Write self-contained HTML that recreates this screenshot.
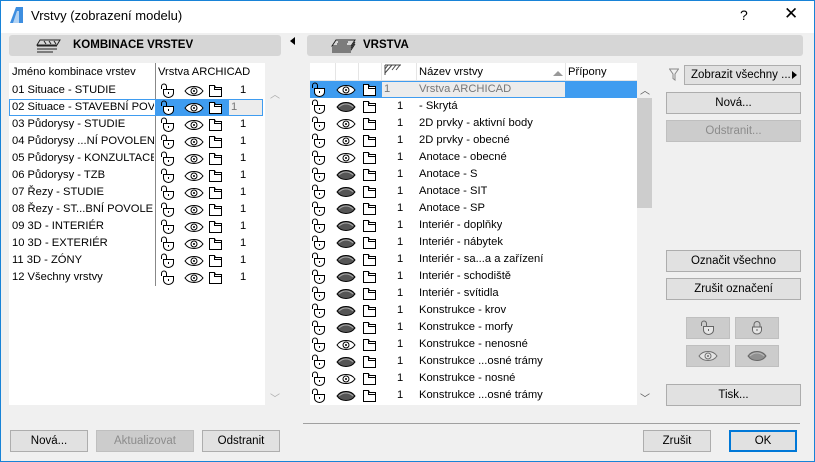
<!DOCTYPE html>
<html><head><meta charset="utf-8"><style>
*{box-sizing:border-box;margin:0;padding:0}
body{width:815px;height:462px;overflow:hidden;background:#f0f0f0;font-family:"Liberation Sans",sans-serif;font-size:11.2px;color:#000;position:relative}
.a{position:absolute}
.win{position:absolute;left:0;top:0;width:815px;height:462px;border:1px solid #1883d7}
.title{left:1px;top:1px;width:813px;height:32px;background:#fff}
.hb{background:#d6d6d6;border-radius:3px;height:21px;font-weight:bold;font-size:11.5px;line-height:21px}
.btn{position:absolute;background:#e1e1e1;border:1px solid #adadad;text-align:center;line-height:20px;height:22px;font-size:11.5px}
.dis{color:#8c8c8c;background:#cccccc;border-color:#bfbfbf}
.row{position:absolute;height:17px;line-height:17px;white-space:nowrap;overflow:hidden}
svg.i{position:absolute}
</style></head><body>
<svg width="0" height="0" style="position:absolute">
<defs>
<symbol id="lk" viewBox="0 0 16 16"><path d="M1.5 6V3.5a2.5 2.5 0 0 1 5 0V6" fill="none" stroke="#000"/><path d="M3.5 6.5h10v3.5a5 4.5 0 0 1-10 0z" fill="#fff" stroke="#000"/><path d="M8.5 9v2" stroke="#000"/></symbol>
<symbol id="ey" viewBox="0 0 20 12"><path d="M1 6C5 0 15 0 19 6C15 12 5 12 1 6z" fill="#fff" stroke="#000"/><circle cx="10" cy="6" r="3" fill="none" stroke="#000"/><circle cx="10" cy="6" r="1" fill="#000"/></symbol>
<symbol id="ef" viewBox="0 0 20 12"><path d="M1 6C5 0 15 0 19 6C15 12 5 12 1 6z" fill="#555" stroke="#000"/><path d="M3 6C7 2 13 2 17 6" fill="none" stroke="#aaa"/></symbol>
<symbol id="dc" viewBox="0 0 16 16"><path d="M1.5 2.5h5l1 2h6v9h-12z" fill="#fff" stroke="#000"/><path d="M6.5 2.5v4h7" fill="none" stroke="#000"/></symbol>
</defs></svg>
<div class="win"></div>
<div class="a title"></div>
<svg class="a" style="left:9px;top:6px" width="16" height="18"><path d="M1 17L7 1h7v16z" fill="#3d8ee0"/><path d="M4 17L8 5h2v12z" fill="#fff" opacity=".6"/></svg>
<div class="a" style="left:31px;top:8px;font-size:13px">Vrstvy (zobrazení modelu)</div>
<div class="a" style="left:740px;top:7px;font-size:14px">?</div>
<div class="a" style="left:784px;top:4px;font-size:17px">✕</div>

<div class="a hb" style="left:9px;top:35px;width:272px"><span style="position:absolute;left:64px">KOMBINACE VRSTEV</span>
<svg class="i" style="left:25px;top:3px" width="30" height="16"><path d="M6 2h20l-3 5H3zM3 8h20M3 11h20M3 14h16" fill="none" stroke="#222"/><path d="M10 3l2 3M15 3l2 3M20 3l2 3" stroke="#222"/></svg></div>
<div class="a" style="left:290px;top:37px;width:0;height:0;border-top:4px solid transparent;border-bottom:4px solid transparent;border-right:5px solid #000"></div>
<div class="a" style="left:9px;top:63px;width:256px;height:342px;background:#fff"></div>
<div class="a" style="left:155px;top:63px;width:1px;height:223px;background:#888"></div>
<div class="row" style="left:12px;top:64px">Jméno kombinace vrstev</div>
<div class="row" style="left:158px;top:64px">Vrstva ARCHICAD</div>
<div class="a" style="left:155px;top:99px;width:73px;height:17px;background:#3f9cf0"></div>
<div class="a" style="left:228px;top:99px;width:35px;height:17px;background:#ececec;border:1px solid #3f9cf0"></div>
<div class="a" style="left:9px;top:99px;width:147px;height:17px;border:1px solid #3f9cf0"></div>
<div class="a" style="left:270px;top:86px;color:#aaa;font-size:10px">︿</div>
<div class="a" style="left:270px;top:390px;color:#aaa;font-size:10px">﹀</div>
<div id="L"></div>

<div class="a hb" style="left:307px;top:35px;width:496px"><span style="position:absolute;left:56px">VRSTVA</span>
<svg class="i" style="left:22px;top:3px" width="30" height="16"><path d="M7 2h19l-4 6H3zM3 10h19l4-6M3 12h19l4-6M3 14h19" fill="none" stroke="#222"/><path d="M9 4h10M8 6h10" stroke="#222"/></svg></div>
<div class="a" style="left:310px;top:63px;width:327px;height:342px;background:#fff"></div>
<div class="a" style="left:637px;top:98px;width:15px;height:110px;background:#cdcdcd"></div>
<div class="a" style="left:640px;top:82px;color:#555;font-size:10px">︿</div>
<div class="a" style="left:640px;top:390px;color:#555;font-size:10px">﹀</div>
<div class="a" style="left:310px;top:63px;width:327px;height:18px;border-bottom:1px solid #e5e5e5"></div>
<div class="a" style="left:335px;top:63px;width:1px;height:18px;background:#e5e5e5"></div>
<div class="a" style="left:358px;top:63px;width:1px;height:18px;background:#e5e5e5"></div>
<div class="a" style="left:381px;top:63px;width:1px;height:18px;background:#e5e5e5"></div>
<div class="a" style="left:416px;top:63px;width:1px;height:18px;background:#e5e5e5"></div>
<div class="a" style="left:565px;top:63px;width:1px;height:18px;background:#e5e5e5"></div>
<svg class="i" style="left:384px;top:64px" width="18" height="12"><path d="M1 1h16M1 1v10M4 1l-3 4M8 1l-7 8M12 1l-4 5M16 1l-4 5" fill="none" stroke="#444"/></svg>
<div class="row" style="left:419px;top:64px">Název vrstvy</div>
<div class="a" style="left:553px;top:71px;width:0;height:0;border-left:5px solid transparent;border-right:5px solid transparent;border-bottom:5px solid #999"></div>
<div class="row" style="left:568px;top:64px">Přípony</div>
<div class="a" style="left:310px;top:81px;width:71px;height:17px;background:#3f9cf0"></div>
<div class="a" style="left:381px;top:81px;width:184px;height:17px;background:#ececec"></div>
<div class="a" style="left:565px;top:81px;width:72px;height:17px;background:#3f9cf0"></div>
<div class="a" style="left:381px;top:81px;width:256px;height:17px;border:1px solid #3f9cf0"></div>
<div id="R"></div>

<svg class="a" style="left:669px;top:68px" width="10" height="13"><path d="M0.5 1h9l-3.5 5v6l-2-1.5V6z" fill="none" stroke="#888"/></svg>
<div class="btn" style="left:684px;top:65px;width:117px;height:20px;line-height:18px;text-align:left;padding-left:6px">Zobrazit všechny ...<span style="position:absolute;right:3px;top:5px;width:0;height:0;border-top:4px solid transparent;border-bottom:4px solid transparent;border-left:5px solid #000"></span></div>
<div class="btn" style="left:666px;top:92px;width:135px">Nová...</div>
<div class="btn dis" style="left:666px;top:120px;width:135px">Odstranit...</div>
<div class="btn" style="left:666px;top:250px;width:135px">Označit všechno</div>
<div class="btn" style="left:666px;top:278px;width:135px">Zrušit označení</div>
<div class="btn dis" style="left:686px;top:317px;width:44px"><svg width="16" height="16" style="margin-top:2px;opacity:.5"><use href="#lk"/></svg></div>
<div class="btn dis" style="left:735px;top:317px;width:44px"><svg width="16" height="16" style="margin-top:2px;opacity:.5"><path d="M5 7V4.5a3 3 0 0 1 6 0V7" fill="none" stroke="#000"/><path d="M3.5 7h9v3a4.5 4 0 0 1-9 0z" fill="#fff" stroke="#000"/><path d="M8 9v2" stroke="#000"/></svg></div>
<div class="btn dis" style="left:686px;top:345px;width:44px"><svg width="20" height="12" style="margin-top:4px;opacity:.45"><use href="#ey"/></svg></div>
<div class="btn dis" style="left:735px;top:345px;width:44px"><svg width="20" height="12" style="margin-top:4px;opacity:.5"><use href="#ef"/></svg></div>
<div class="btn" style="left:666px;top:384px;width:135px">Tisk...</div>

<div class="a" style="left:303px;top:423px;width:497px;height:1px;background:#a0a0a0"></div>
<div class="btn" style="left:10px;top:430px;width:78px">Nová...</div>
<div class="btn dis" style="left:96px;top:430px;width:98px">Aktualizovat</div>
<div class="btn" style="left:202px;top:430px;width:78px">Odstranit</div>
<div class="btn" style="left:643px;top:430px;width:68px">Zrušit</div>
<div class="btn" style="left:729px;top:430px;width:68px;border:2px solid #0078d7;line-height:18px">OK</div>

<script>
var L=["01 Situace - STUDIE","02 Situace - STAVEBNÍ POVO","03 Půdorysy - STUDIE","04 Půdorysy ...NÍ POVOLENÍ","05 Půdorysy - KONZULTACE","06 Půdorysy - TZB","07 Řezy - STUDIE","08 Řezy - ST...BNÍ POVOLENÍ","09 3D - INTERIÉR","10 3D - EXTERIÉR","11 3D - ZÓNY","12 Všechny vrstvy"];
var h="";
L.forEach(function(n,i){var y=82+i*17;
h+='<div class="row" style="left:12px;width:142px;top:'+y+'px">'+n+'</div>';
h+='<svg class="i" style="left:160px;top:'+(y+1)+'px" width="16" height="16"><use href="#lk"/></svg>';
h+='<svg class="i" style="left:184px;top:'+(y+3)+'px" width="20" height="12"><use href="#ey"/></svg>';
h+='<svg class="i" style="left:208px;top:'+(y+1)+'px" width="16" height="16"><use href="#dc"/></svg>';
h+='<div class="row" style="left:'+(i==1?231:240)+'px;top:'+y+'px;color:'+(i==1?'#777':'#000')+'">1</div>';});
document.getElementById('L').innerHTML=h;
var R=[["Vrstva ARCHICAD",0],["- Skrytá",1],["2D prvky - aktivní body",0],["2D prvky - obecné",0],["Anotace - obecné",0],["Anotace - S",1],["Anotace - SIT",1],["Anotace - SP",1],["Interiér - doplňky",1],["Interiér - nábytek",1],["Interiér - sa...a a zařízení",1],["Interiér - schodiště",1],["Interiér - svítidla",1],["Konstrukce - krov",1],["Konstrukce - morfy",1],["Konstrukce - nenosné",0],["Konstrukce ...osné trámy",1],["Konstrukce - nosné",0],["Konstrukce ...osné trámy",1]];
h="";
R.forEach(function(r,i){var y=81+i*17;
h+='<div class="row" style="left:419px;top:'+y+'px;color:'+(i==0?'#777':'#000')+'">'+r[0]+'</div>';
h+='<svg class="i" style="left:311px;top:'+(y+1)+'px" width="16" height="16"><use href="#lk"/></svg>';
h+='<svg class="i" style="left:336px;top:'+(y+3)+'px" width="20" height="12"><use href="'+(r[1]?'#ef':'#ey')+'"/></svg>';
h+='<svg class="i" style="left:362px;top:'+(y+1)+'px" width="16" height="16"><use href="#dc"/></svg>';
h+='<div class="row" style="left:'+(i==0?384:397)+'px;top:'+y+'px;color:'+(i==0?'#777':'#000')+'">1</div>';});
document.getElementById('R').innerHTML=h;
</script>
</body></html>
